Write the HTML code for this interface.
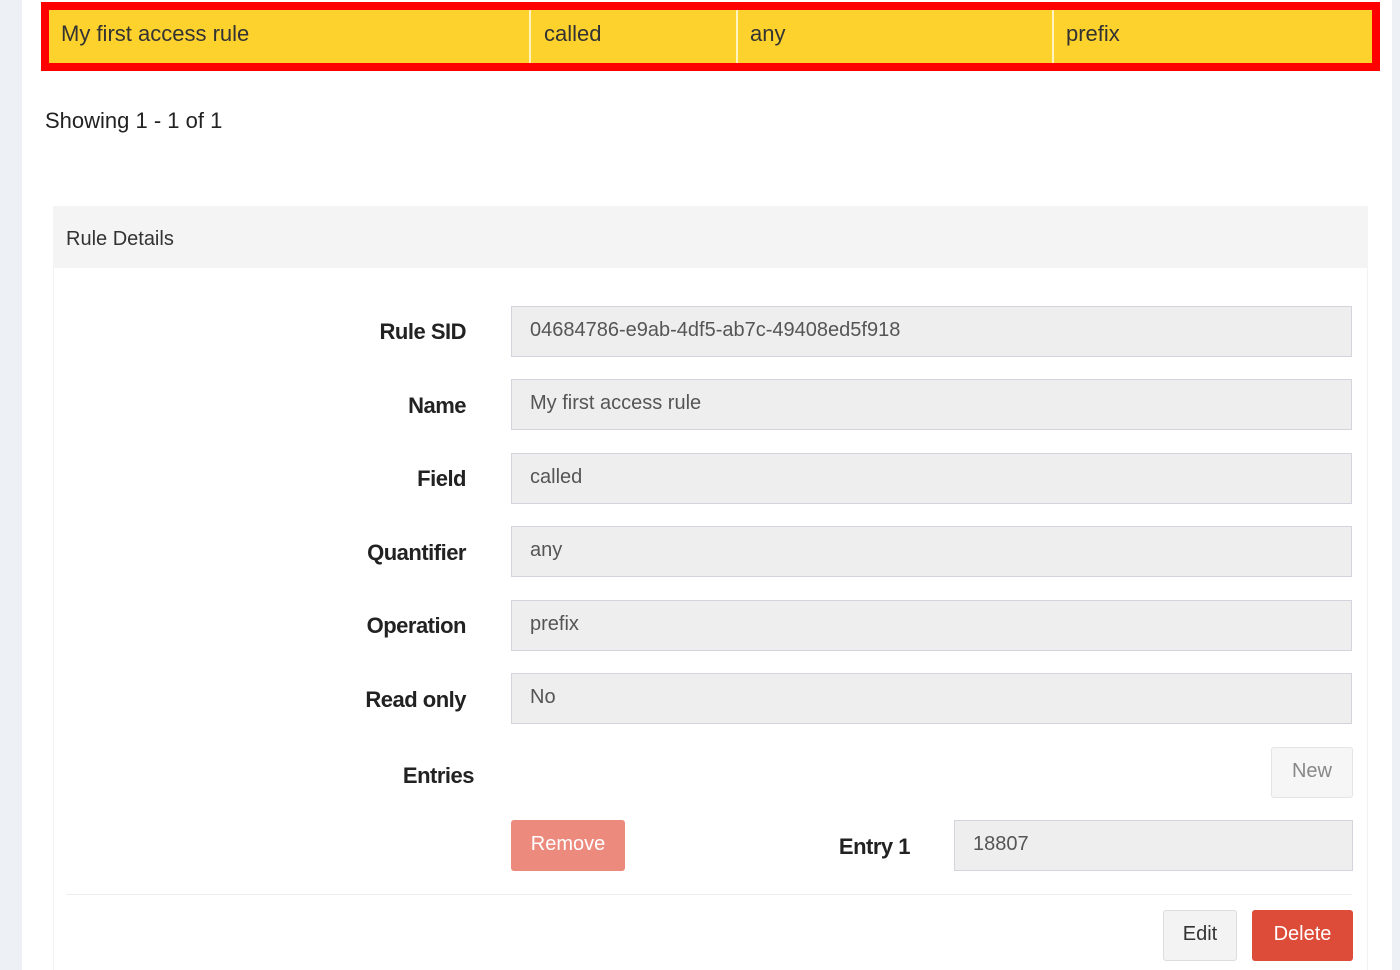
<!DOCTYPE html>
<html style="overflow:hidden"><head><style>
html,body{overflow:hidden}
body{margin:0;width:1400px;height:970px;background:#edf0f5;font-family:"Liberation Sans",sans-serif;position:relative;overflow:hidden}
.a{position:absolute}
.main{left:22px;top:0;width:1370px;height:970px;background:#fff}
.t{color:#333;font-size:22px}
.lbl{position:absolute;right:934px;font-weight:bold;font-size:22px;color:#222;letter-spacing:-0.5px}
.in{position:absolute;left:511px;width:839px;height:49px;background:#eeeeee;border:1px solid #d4d4dc;color:#555;font-size:20px;line-height:47px;box-sizing:content-box;text-indent:18px}
.btn{position:absolute;border-radius:3px;font-size:20px;text-align:center;box-sizing:border-box}
</style></head><body>
<div class="a main"></div>
<div class="a" style="left:41px;top:2px;width:1339px;height:69px;background:#f00"></div>
<div class="a" style="left:49px;top:10px;width:1323px;height:53px;background:#fed22d"></div>
<div class="a" style="left:529px;top:10px;width:2px;height:53px;background:#fff3c0"></div>
<div class="a" style="left:736px;top:10px;width:2px;height:53px;background:#fff3c0"></div>
<div class="a" style="left:1052px;top:10px;width:2px;height:53px;background:#fff3c0"></div>
<div class="a t" style="left:61px;top:21px">My first access rule</div>
<div class="a t" style="left:544px;top:21px">called</div>
<div class="a t" style="left:750px;top:21px">any</div>
<div class="a t" style="left:1066px;top:21px">prefix</div>
<div class="a" style="left:45px;top:108px;font-size:22px;color:#222">Showing 1 - 1 of 1</div>
<div class="a" style="left:53px;top:206px;width:1315px;height:62px;background:#f4f4f4"></div>
<div class="a" style="left:53px;top:268px;width:1313px;height:702px;border-left:1px solid #f2f2f2;border-right:1px solid #f2f2f2"></div>
<div class="a" style="left:66px;top:228px;font-size:20px;color:#333">Rule Details</div>
<div class="lbl" style="top:319px">Rule SID</div><div class="in" style="top:306px">04684786-e9ab-4df5-ab7c-49408ed5f918</div>
<div class="lbl" style="top:393px">Name</div><div class="in" style="top:379px">My first access rule</div>
<div class="lbl" style="top:466px">Field</div><div class="in" style="top:453px">called</div>
<div class="lbl" style="top:540px">Quantifier</div><div class="in" style="top:526px">any</div>
<div class="lbl" style="top:613px">Operation</div><div class="in" style="top:600px">prefix</div>
<div class="lbl" style="top:687px">Read only</div><div class="in" style="top:673px">No</div>
<div class="lbl" style="top:763px;right:926px">Entries</div>
<div class="btn" style="left:1271px;top:747px;width:82px;height:51px;background:#f6f6f6;border:1px solid #e4e4e4;color:#888;line-height:47px">New</div>
<div class="btn" style="left:511px;top:820px;width:114px;height:51px;background:#ec8a7e;color:#fff;line-height:49px">Remove</div>
<div class="lbl" style="top:834px;right:490px">Entry 1</div>
<div class="in" style="top:820px;left:954px;width:397px">18807</div>
<div class="a" style="left:66px;top:894px;width:1286px;height:1px;background:#eee"></div>
<div class="btn" style="left:1163px;top:910px;width:74px;height:51px;background:#f3f3f3;border:1px solid #ddd;color:#333;line-height:47px">Edit</div>
<div class="btn" style="left:1252px;top:910px;width:101px;height:51px;background:#dd4b39;color:#fff;line-height:49px">Delete</div>
</body></html>
